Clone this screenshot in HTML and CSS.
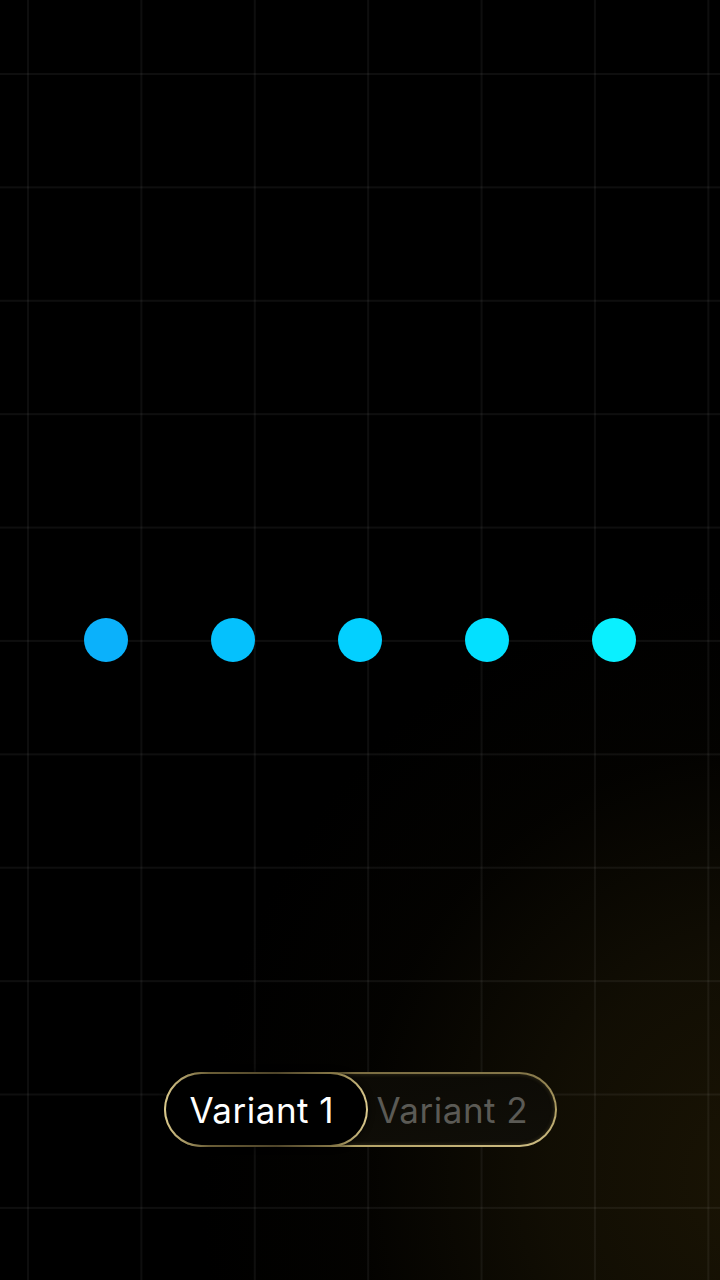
FILE: index.html
```html
<!DOCTYPE html>
<html lang="en">
<head>
<meta charset="utf-8">
<title>Dots</title>
<link rel="stylesheet" href="styles.css">
</head>
<body>
<main class="stage">
  <div class="dots">
    <span class="dot d1"></span>
    <span class="dot d2"></span>
    <span class="dot d3"></span>
    <span class="dot d4"></span>
    <span class="dot d5"></span>
  </div>
  <div class="toggle">
    <button class="opt active">Variant 1</button>
    <button class="opt">Variant 2</button>
  </div>
</main>
</body>
</html>
```

FILE: styles.css
```css
* { box-sizing: border-box; }
html, body { margin: 0; padding: 0; }
body {
  width: 720px;
  height: 1280px;
  overflow: hidden;
  background-color: #000;
  font-family: Inter, "Noto Sans", sans-serif;
}
.stage {
  position: relative;
  width: 720px;
  height: 1280px;
  display: flex;
  flex-direction: column;
  align-items: center;
  background-image:
    linear-gradient(to right, rgba(255,255,255,0.055) 0 2px, transparent 2px),
    linear-gradient(to bottom, rgba(255,255,255,0.055) 0 2px, transparent 2px),
    radial-gradient(ellipse 560px 600px at 760px 1180px, rgba(26,20,4,1) 0%, rgba(20,16,4,0.85) 38%, rgba(8,6,1,0.4) 72%, rgba(0,0,0,0) 100%);
  background-size: 113.4px 113.4px, 113.4px 113.4px, 100% 100%;
  background-position: 27px 0, 0 73px, 0 0;
  background-color: #000;
}
.dots {
  margin-top: 618px;
  display: flex;
  gap: 83px;
}
.dot {
  width: 44px;
  height: 44px;
  border-radius: 50%;
  display: block;
}
.d1 { background: #0bb1fb; }
.d2 { background: #05c1fd; }
.d3 { background: #03d0ff; }
.d4 { background: #03e0ff; }
.d5 { background: #0af0ff; }

.toggle {
  margin-top: 410px;
  width: 393px;
  height: 75px;
  display: flex;
  border-radius: 999px;
  border: 2px solid transparent;
  background:
    linear-gradient(rgba(6,5,2,0.95), rgba(6,5,2,0.95)) padding-box,
    linear-gradient(170deg, #6f6239 0%, #85774a 45%, #b3a266 75%, #d0bf86 100%) border-box;
  box-shadow: inset 0 0 4px rgba(180,160,100,0.25);
}
.opt {
  font-family: Inter, "Noto Sans", sans-serif;
  font-size: 35px;
  font-weight: 400;
  letter-spacing: 0.5px;
  border: 0;
  background: none;
  color: #5b5a55;
  display: flex;
  align-items: center;
  padding: 0 0 0 9px;
  flex: 1;
  white-space: nowrap;
  cursor: pointer;
}
.opt.active {
  flex: 0 0 204px;
  margin: -2px 0 -2px -2px;
  padding-left: 24px;
  color: #ffffff;
  border-radius: 999px;
  border: 2px solid transparent;
  background:
    linear-gradient(#000, #000) padding-box,
    linear-gradient(90deg, #dccb8e 0%, #6a5d36 22%, #4f452a 55%, #8a7b4a 85%, #ddcc90 100%) border-box;
  box-shadow: 0 0 6px rgba(0,0,0,0.8);
}
```
